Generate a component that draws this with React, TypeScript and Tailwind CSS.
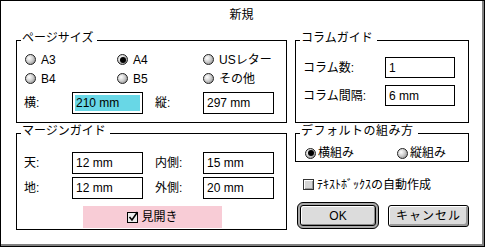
import React from "react";

function Radio({ checked = false }: { checked?: boolean }) {
  return (
    <span className="w-[11px] h-[11px] shrink-0 rounded-full border border-[#222] bg-[radial-gradient(circle_at_35%_35%,#ffffff_0%,#cfcfcf_45%,#7a7a7a_100%)] flex items-center justify-center">
      {checked && <span className="w-[6px] h-[6px] rounded-full bg-black" />}
    </span>
  );
}

function Field({ value, w, h, selected = false }: { value: string; w: string; h: string; selected?: boolean }) {
  return (
    <div className={`${w} ${h} shrink-0 border border-black bg-white p-[2px] flex`}>
      <div className={`flex-1 flex items-center pl-[1px] leading-none ${selected ? "bg-[#68d7e6]" : ""}`}>{value}</div>
    </div>
  );
}

function Group({ title, className, legendClass = "", children }: { title: string; className: string; legendClass?: string; children: React.ReactNode }) {
  return (
    <div className={`relative border border-black ${className}`}>
      <span className={`absolute left-[4px] top-[-10px] bg-white pl-[1px] pr-[4px] leading-[14px] whitespace-nowrap ${legendClass}`}>
        {title}　
      </span>
      {children}
    </div>
  );
}

export default function App() {
  // ページサイズの選択肢
  const sizes = [
    { label: "A3", checked: false },
    { label: "A4", checked: true },
    { label: "USレター", checked: false },
    { label: "B4", checked: false },
    { label: "B5", checked: false },
    { label: "その他", checked: false },
  ];

  return (
    <div className="w-[485px] h-[247px] border border-black bg-white text-[12px] text-black font-['Liberation_Sans','Noto_Sans_CJK_JP',sans-serif]">
      <div className="h-full border-r-2 border-b-2 border-[#808080]">
        <div className="h-[39px] pt-[6px] flex justify-center leading-[16px]">新規</div>

        <div className="flex pl-[15px] gap-[8px]">
          {/* left column */}
          <div className="flex flex-col">
            <Group title="ページサイズ" className="w-[271px] h-[83px]">
              <div className="pt-[9px]">
                <div className="grid grid-cols-[92px_86px_1fr] pl-[8px]">
                  {sizes.map(s => (
                    <div key={s.label} className="h-[19px] flex items-center gap-[5px]">
                      <Radio checked={s.checked} />
                      <span className="leading-none">{s.label}</span>
                    </div>
                  ))}
                </div>
                <div className="flex items-center pl-[7px] mt-[4px]">
                  <span className="w-[48px]">横:</span>
                  <Field value="210 mm" w="w-[71px]" h="h-[22px]" selected />
                  <span className="w-[48px] ml-[12px]">縦:</span>
                  <Field value="297 mm" w="w-[71px]" h="h-[22px]" />
                </div>
              </div>
            </Group>

            <Group title="マージンガイド" className="w-[271px] h-[97px] mt-[10px]">
              <div className="pt-[18px] pl-[7px]">
                <div className="flex items-center">
                  <span className="w-[48px]">天:</span>
                  <Field value="12 mm" w="w-[71px]" h="h-[22px]" />
                  <span className="w-[48px] ml-[12px]">内側:</span>
                  <Field value="15 mm" w="w-[71px]" h="h-[22px]" />
                </div>
                <div className="flex items-center mt-[3px]">
                  <span className="w-[48px]">地:</span>
                  <Field value="12 mm" w="w-[71px]" h="h-[22px]" />
                  <span className="w-[48px] ml-[12px]">外側:</span>
                  <Field value="20 mm" w="w-[71px]" h="h-[22px]" />
                </div>
                <div className="mt-[7px] ml-[59px] w-[139px] h-[22px] bg-[#f8ccd6] flex items-center justify-center gap-[2px]">
                  <svg width="12" height="12" viewBox="0 0 12 12">
                    <rect x="0.5" y="1.5" width="10" height="10" fill="#ececec" stroke="#000" />
                    <path d="M2.5 6 L5 9 L10.5 1" stroke="#000" strokeWidth="1.6" fill="none" />
                  </svg>
                  <span className="leading-none">見開き</span>
                </div>
              </div>
            </Group>
          </div>

          {/* right column */}
          <div className="flex flex-col">
            <Group title="コラムガイド" className="w-[174px] h-[83px]">
              <div className="pt-[16px] pl-[7px]">
                <div className="flex items-center">
                  <span className="w-[82px]">コラム数:</span>
                  <Field value="1" w="w-[70px]" h="h-[21px]" />
                </div>
                <div className="flex items-center mt-[7px]">
                  <span className="w-[82px]">コラム間隔:</span>
                  <Field value="6 mm" w="w-[70px]" h="h-[21px]" />
                </div>
              </div>
            </Group>

            <Group title="デフォルトの組み方" className="w-[174px] h-[29px] mt-[10px]" legendClass="tracking-[0.5px]">
              <div className="pt-[13px] pl-[9px] flex items-center h-[25px]">
                <div className="w-[92px] flex items-center gap-[2px]">
                  <Radio checked />
                  <span className="leading-none">横組み</span>
                </div>
                <div className="flex items-center gap-[2px]">
                  <Radio />
                  <span className="leading-none">縦組み</span>
                </div>
              </div>
            </Group>

            <div className="mt-[17px] pl-[8px] h-[11px] flex items-center gap-[3px]">
              <span className="w-[11px] h-[11px] shrink-0 border border-[#333] bg-[#d4d4d4] shadow-[inset_1px_1px_0_#fff,inset_-1px_-1px_0_#999]" />
              <span className="leading-none whitespace-nowrap">ﾃｷｽﾄﾎﾞｯｸｽの自動作成</span>
            </div>

            <div className="mt-[12px] pl-[2px] flex items-center gap-[9px]">
              <div className="w-[82px] h-[27px] rounded-[6px] border border-black bg-[#a8a8a8] p-[2px] flex">
                <div className="flex-1 rounded-[3px] border border-black bg-[#dcdcdc] shadow-[inset_1px_1px_0_#fff,inset_-1px_-1px_0_#8a8a8a] flex items-center justify-center leading-none">
                  OK
                </div>
              </div>
              <div className="w-[81px] h-[22px] rounded-[3px] border border-black bg-[#dcdcdc] shadow-[inset_1px_1px_0_#fff,inset_-2px_-2px_0_#999] flex items-center justify-center leading-none tracking-[1px]">
                キャンセル
              </div>
            </div>
          </div>
        </div>
      </div>
    </div>
  );
}
